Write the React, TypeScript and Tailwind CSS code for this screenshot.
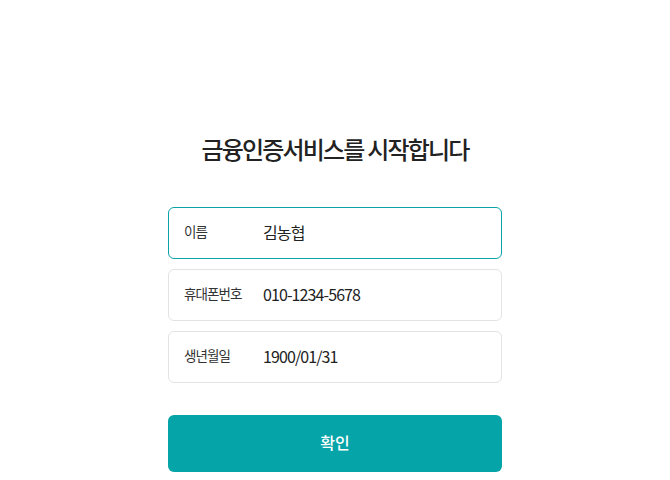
const FIELDS = [
  { label: '이름', value: '김농협', active: true },
  { label: '휴대폰번호', value: '010-1234-5678', active: false },
  { label: '생년월일', value: '1900/01/31', active: false },
];

const Field = ({ label, value, active }: { label: string, value: string, active: boolean }) => (
  <div
    className={
      active
        ? 'flex items-center h-[52px] rounded-md border border-[#0aa3a8] bg-white px-[15px] pb-[3px]'
        : 'flex items-center h-[52px] rounded-md border border-[#e3e3e3] bg-white px-[15px] pb-[3px]'
    }
  >
    <span className="w-[79px] text-[13.5px] text-[#333] tracking-[-0.9px]">{label}</span>
    <span className="text-[16px] text-[#222] tracking-[-0.9px]">{value}</span>
  </div>
);

export default function App() {
  return (
    <div
      className="flex flex-col items-center w-[670px] h-[480px] bg-white"
      style={{ fontFamily: '"Noto Sans CJK KR", "Noto Sans", sans-serif' }}
    >
      <h1 className="mt-[132px] text-[24px] font-medium text-[#222] tracking-[-1.8px] leading-[34px]">
        금융인증서비스를 시작합니다
      </h1>

      <div className="flex flex-col gap-[10px] w-[334px] mt-[41px]">
        {FIELDS.map((f) => (
          <Field key={f.label} {...f} />
        ))}
      </div>

      <button className="mt-[32px] w-[334px] h-[57px] rounded-md bg-[#05a4a8] pb-[3px] text-[16px] font-medium text-white">
        확인
      </button>
    </div>
  );
}
